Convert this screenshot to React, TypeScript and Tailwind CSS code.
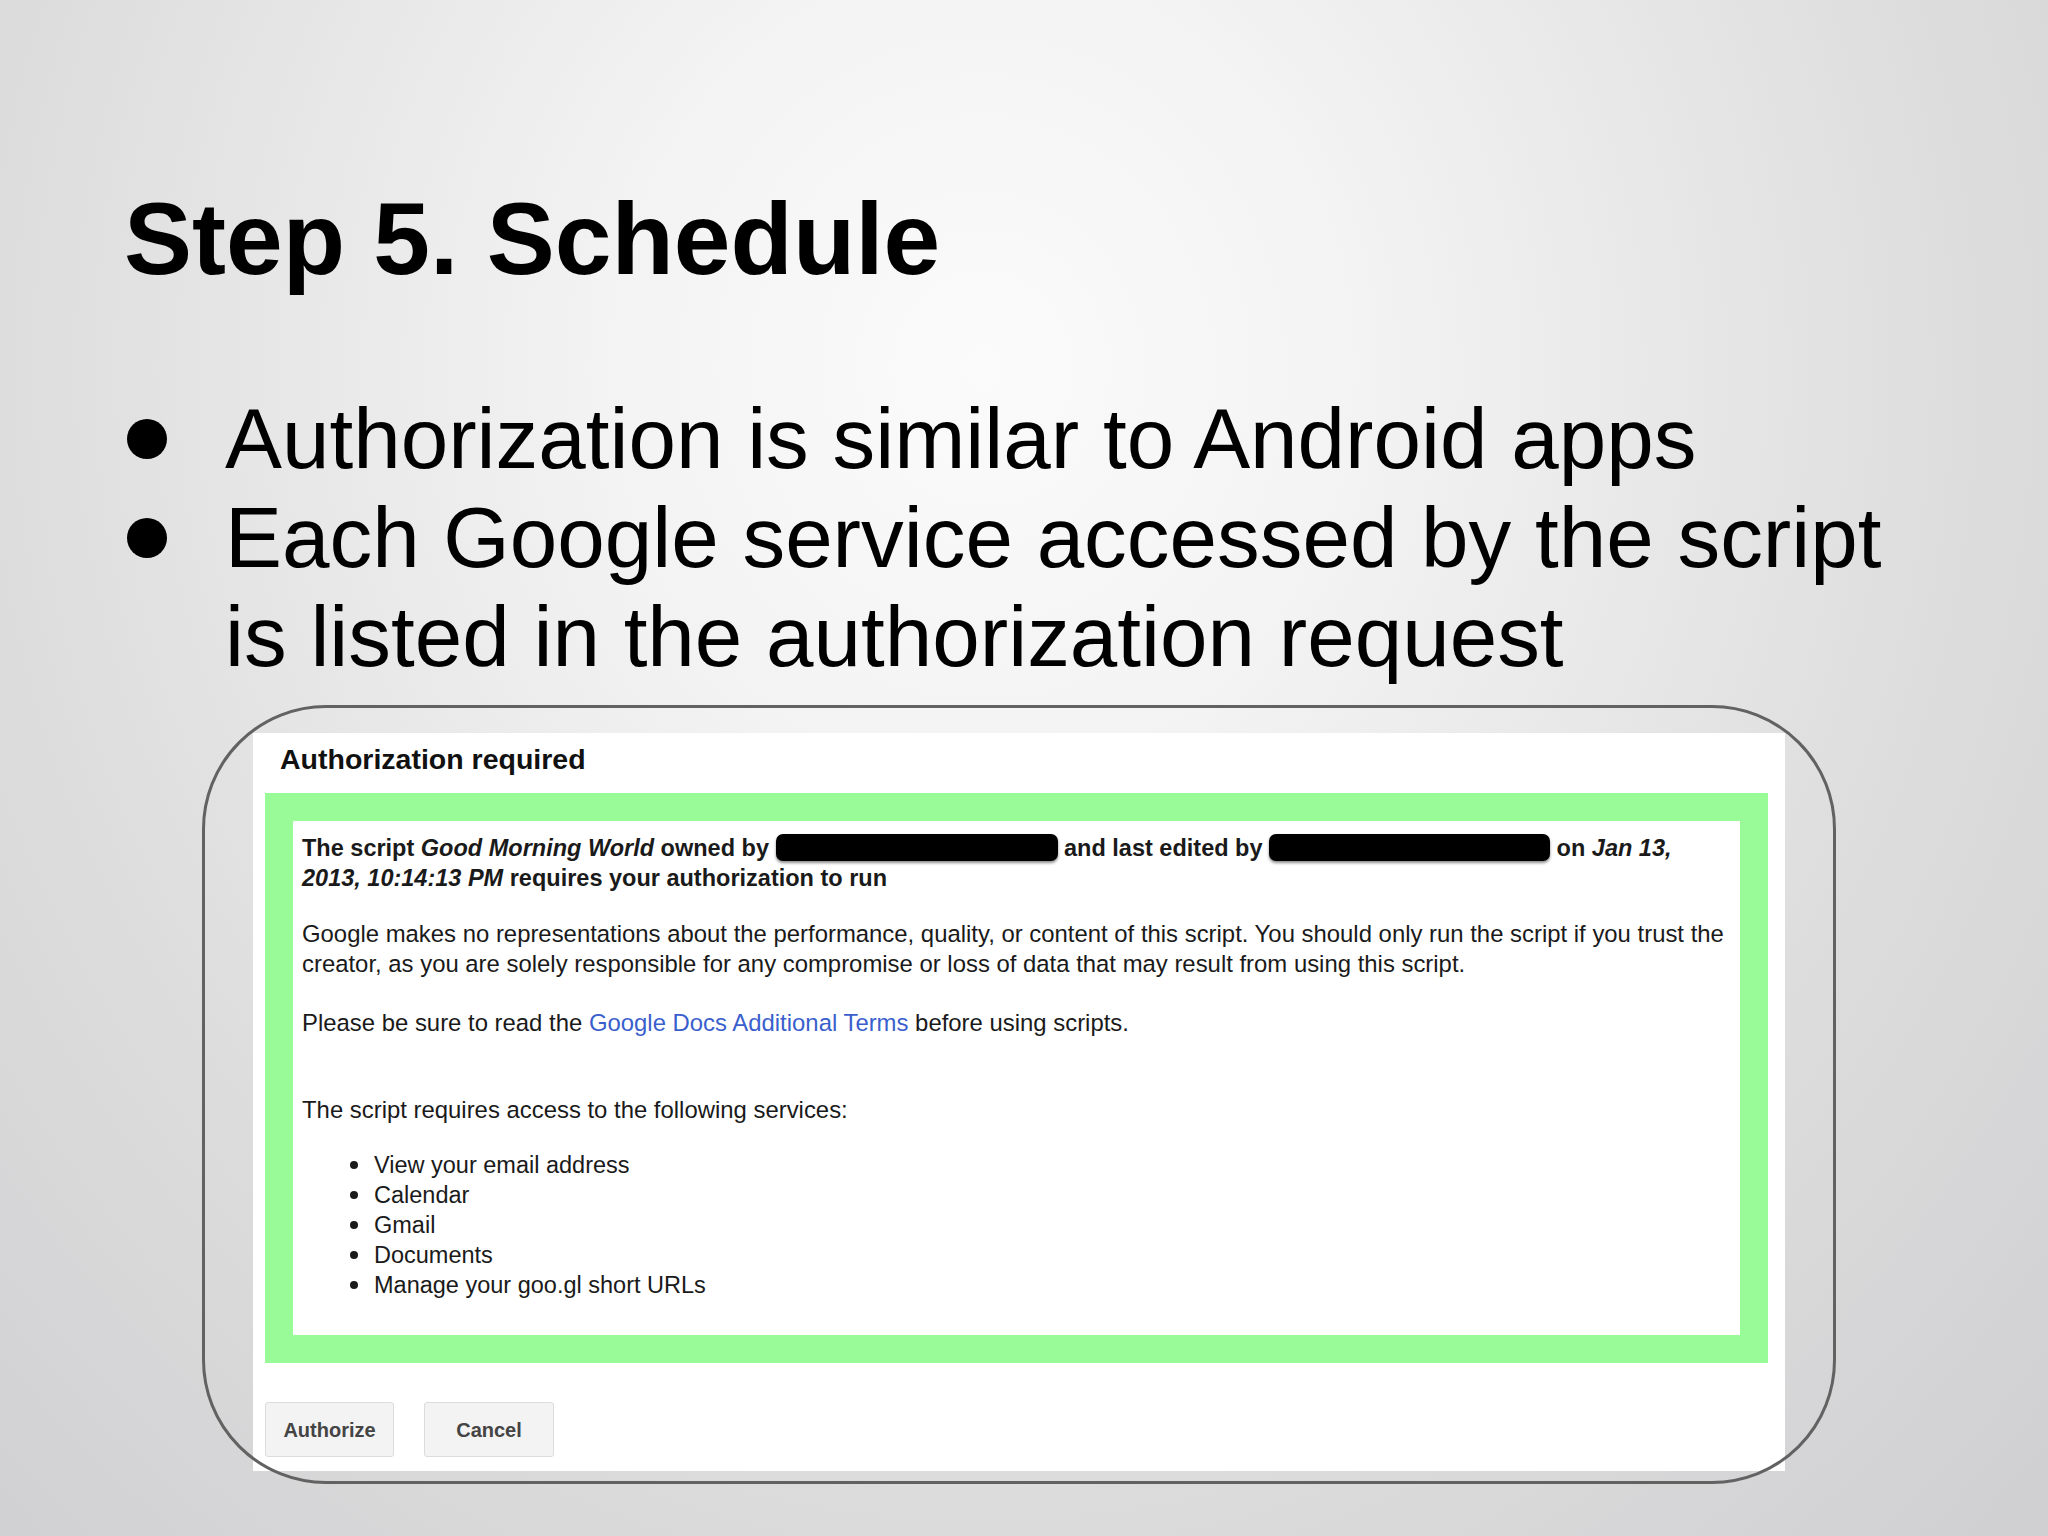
import React from "react";

const Redact = ({ w }: { w: string }) => (
  <span className={`inline-block ${w} h-[27px] align-[-5px] rounded-[7px] bg-black shadow-[0_2px_3px_rgba(0,0,0,0.45)]`} />
);

export default function App() {
  const services = [
    "View your email address",
    "Calendar",
    "Gmail",
    "Documents",
    "Manage your goo.gl short URLs",
  ];
  return (
    <div className="w-[2048px] h-[1536px] overflow-hidden font-['Liberation_Sans',Arial,sans-serif] text-black bg-[radial-gradient(ellipse_at_48%_24%,#fbfbfb_0%,#f3f3f3_25%,#dddddd_65%,#cfcfd2_100%)]">
      <h1 className="pl-[124px] pt-[188px] text-[102px] leading-[102px] font-bold">Step 5. Schedule</h1>

      <ul className="mt-[99px] pl-[127px] text-[85.4px] leading-[99px]">
        <li className="flex">
          <span className="w-[98px] shrink-0 flex items-center h-[99px]">
            <span className="w-[40px] h-[40px] rounded-full bg-black" />
          </span>
          <span>Authorization is similar to Android apps</span>
        </li>
        <li className="flex">
          <span className="w-[98px] shrink-0 flex items-center h-[99px]">
            <span className="w-[40px] h-[40px] rounded-full bg-black" />
          </span>
          <span className="w-[1690px]">Each Google service accessed by the script is listed in the authorization request</span>
        </li>
      </ul>

      <div className="relative ml-[202px] mt-[19px] w-[1634px] h-[779px] pl-[51px] pt-[28px]">
        <div className="w-[1532px] h-[738px] bg-white pl-[12px] pr-[17px]">
          <div className="pl-[15px] pt-[12px] text-[28.5px] leading-[29px] font-bold text-[#111]">Authorization required</div>
          <div className="mt-[19px] border-[28px] border-[#98fb98]">
            <div className="bg-white pl-[9px] pr-[9px] pt-[12px] pb-[35px] text-[23.9px] leading-[30px] text-[#1a1a1a]">
              <p className="font-bold text-[23.5px]">
                The script <i>Good Morning World</i> owned by <Redact w="w-[282px]" /> and last edited by{" "}
                <Redact w="w-[281px]" /> on <i>Jan 13, 2013, 10:14:13 PM</i> requires your authorization to run
              </p>
              <p className="mt-[26px]">
                Google makes no representations about the performance, quality, or content of this script. You should only run the script if you trust the creator, as you are solely responsible for any compromise or loss of data that may result from using this script.
              </p>
              <p className="mt-[29px]">
                Please be sure to read the <span className="text-[#3a5fcd]">Google Docs Additional Terms</span> before using scripts.
              </p>
              <p className="mt-[57px]">The script requires access to the following services:</p>
              <ul className="mt-[25px] pl-[48px] text-[23.5px]">
                {services.map((s) => (
                  <li key={s} className="flex items-center">
                    <span className="w-[24px] shrink-0 flex">
                      <span className="w-[8px] h-[8px] rounded-full bg-[#1a1a1a]" />
                    </span>
                    <span>{s}</span>
                  </li>
                ))}
              </ul>
            </div>
          </div>
          <div className="mt-[39px] flex gap-[30px]">
            <button className="w-[129px] h-[55px] rounded-[3px] border border-[#dcdcdc] bg-[#f3f3f3] text-[20px] font-bold text-[#444]">Authorize</button>
            <button className="w-[130px] h-[55px] rounded-[3px] border border-[#dcdcdc] bg-[#f3f3f3] text-[20px] font-bold text-[#444]">Cancel</button>
          </div>
        </div>
        <div className="pointer-events-none absolute inset-0 rounded-[124px] border-[3px] border-[#626262]" />
      </div>
    </div>
  );
}
